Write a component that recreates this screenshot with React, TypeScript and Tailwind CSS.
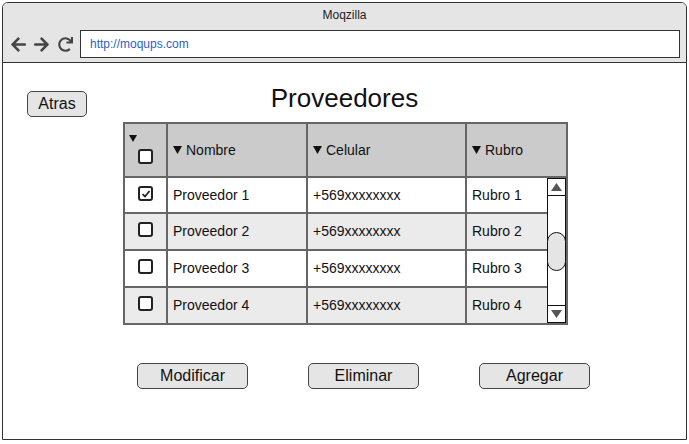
import React from "react";
import { FaArrowLeft, FaArrowRight, FaRedo } from "react-icons/fa";

const rows = [
  { name: "Proveedor 1", cel: "+569xxxxxxxx", rubro: "Rubro 1", checked: true, bg: "bg-white", h: "h-[36px]" },
  { name: "Proveedor 2", cel: "+569xxxxxxxx", rubro: "Rubro 2", checked: false, bg: "bg-[#ebebeb]", h: "h-[37px]" },
  { name: "Proveedor 3", cel: "+569xxxxxxxx", rubro: "Rubro 3", checked: false, bg: "bg-white", h: "h-[37px]" },
  { name: "Proveedor 4", cel: "+569xxxxxxxx", rubro: "Rubro 4", checked: false, bg: "bg-[#ebebeb]", h: "h-[35px]" },
];

function Box({ checked }: { checked?: boolean }) {
  return (
    <div className="w-[15px] h-[15px] rounded-[3px] border-2 border-[#222] bg-white flex items-center justify-center">
      {checked && (
        <svg width="10" height="10" viewBox="0 0 10 10">
          <path d="M1.5 5.2 L4 7.5 L8.5 2" fill="none" stroke="#222" strokeWidth="1.8" />
        </svg>
      )}
    </div>
  );
}

function Tri() {
  return (
    <svg width="9" height="8" viewBox="0 0 9 8" className="mr-[4px] shrink-0">
      <path d="M0 0 L9 0 L4.5 8 Z" fill="#111" />
    </svg>
  );
}

function Btn({ label, w }: { label: string; w: string }) {
  return (
    <div className={`${w} h-[26px] rounded-[5px] border border-[#444] bg-[#e5e5e5] flex items-center justify-center text-[16px] text-[#111]`}>
      {label}
    </div>
  );
}

export default function App() {
  return (
    <div className="w-[689px] h-[444px] bg-white pl-[2px] pt-[2px]" style={{ fontFamily: '"Liberation Sans", Arial, sans-serif' }}>
      <div className="w-[685px] h-[438px] border border-[#333] rounded-t-[6px] overflow-hidden flex flex-col">
        {/* Browser chrome */}
        <div className="h-[60px] bg-[#e5e5e5] border-b border-[#333] flex flex-col">
          <div className="pt-[4px] h-[20px] leading-[16px] text-[12px] text-[#222] text-center">Moqzilla</div>
          <div className="mt-[7px] flex items-center pl-[7px]">
            <FaArrowLeft className="w-[17px] h-[17px] text-[#444]" />
            <FaArrowRight className="ml-[6px] w-[17px] h-[17px] text-[#444]" />
            <FaRedo className="ml-[8px] w-[15px] h-[15px] text-[#444]" />
            <div className="ml-[7px] w-[600px] h-[28px] border border-[#333] bg-white flex items-center pl-[9px] text-[12px] text-[#2e5fc4]">
              http://moqups.com
            </div>
          </div>
        </div>

        {/* Content */}
        <div className="flex-1 flex flex-col">
          <div className="grid grid-cols-[1fr_auto_1fr] grid-rows-[50px] h-[50px]">
            <div className="pt-[28px] pl-[24px]">
              <Btn label="Atras" w="w-[60px]" />
            </div>
            <div className="pt-[20px] text-[26px] leading-[30px] text-[#111]">Proveedores</div>
            <div />
          </div>

          {/* Table */}
          <div className="mt-[9px] ml-[120px] w-[445px] border-2 border-[#666] text-[14px] text-[#111]">
            <div className="flex h-[54px] bg-[#cbcbcb] border-b-2 border-[#666]">
              <div className="w-[43px] border-r-2 border-[#666] flex flex-col pt-[11px] pl-[4px]">
                <svg width="8" height="7" viewBox="0 0 8 7"><path d="M0 0 L8 0 L4 7 Z" fill="#111" /></svg>
                <div className="ml-[9px] mt-[7px]">
                  <Box />
                </div>
              </div>
              <div className="w-[140px] border-r-2 border-[#666] flex items-center pl-[5px]">
                <Tri />Nombre
              </div>
              <div className="w-[159px] border-r-2 border-[#666] flex items-center pl-[5px]">
                <Tri />Celular
              </div>
              <div className="flex-1 flex items-center pl-[5px]">
                <Tri />Rubro
              </div>
            </div>
            <div className="flex">
              <div className="flex-1 flex flex-col">
                {rows.map((r, i) => (
                  <div key={i} className={`flex ${r.h} ${r.bg} ${i < rows.length - 1 ? "border-b-2 border-[#666]" : ""}`}>
                    <div className="w-[43px] border-r-2 border-[#666] flex justify-center pt-[8px]">
                      <Box checked={r.checked} />
                    </div>
                    <div className="w-[140px] border-r-2 border-[#666] flex items-center pl-[5px]">{r.name}</div>
                    <div className="w-[159px] border-r-2 border-[#666] flex items-center pl-[5px]">{r.cel}</div>
                    <div className="flex-1 flex items-center pl-[5px]">{r.rubro}</div>
                  </div>
                ))}
              </div>
              <div className="w-[19px] border border-[#111] bg-white flex flex-col">
                <div className="h-[17px] border-b border-[#111] flex items-center justify-center">
                  <svg width="11" height="8" viewBox="0 0 11 8"><path d="M5.5 0 L11 8 L0 8 Z" fill="#555" /></svg>
                </div>
                <div className="flex-1 flex flex-col justify-start pt-[36px]">
                  <div className="h-[39px] rounded-full border border-[#111] bg-[#e5e5e5] -mx-[1px]" />
                </div>
                <div className="h-[17px] border-t border-[#111] flex items-center justify-center">
                  <svg width="11" height="8" viewBox="0 0 11 8"><path d="M0 0 L11 0 L5.5 8 Z" fill="#555" /></svg>
                </div>
              </div>
            </div>
          </div>

          {/* Buttons */}
          <div className="mt-[38px] ml-[134px] flex gap-[60px]">
            <Btn label="Modificar" w="w-[111px]" />
            <Btn label="Eliminar" w="w-[111px]" />
            <Btn label="Agregar" w="w-[111px]" />
          </div>
        </div>
      </div>
    </div>
  );
}
